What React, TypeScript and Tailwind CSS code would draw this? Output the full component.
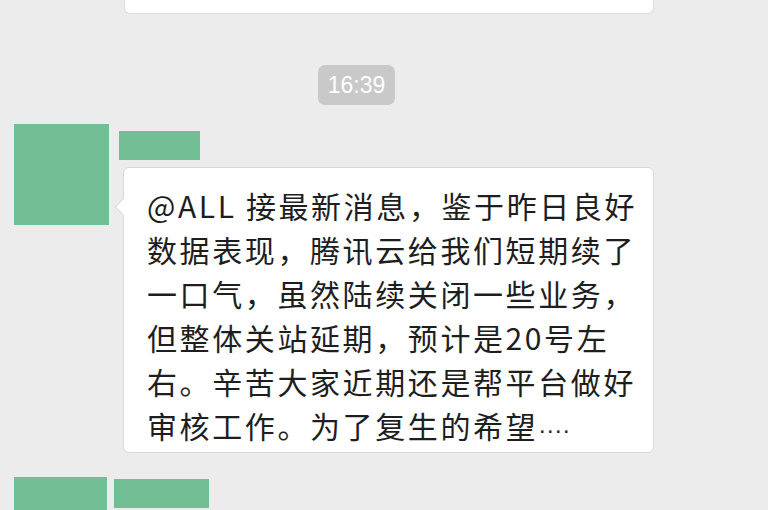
import React from "react";

const lines = [
  "@ALL 接最新消息，鉴于昨日良好",
  "数据表现，腾讯云给我们短期续了",
  "一口气，虽然陆续关闭一些业务，",
  "但整体关站延期，预计是20号左",
  "右。辛苦大家近期还是帮平台做好",
];

export default function App() {
  return (
    <div
      className="w-[768px] h-[510px] overflow-hidden bg-[#ececec] flex flex-col"
      style={{ fontFamily: '"Noto Sans CJK SC", "Noto Sans", sans-serif' }}
    >
      {/* previous bubble */}
      <div className="ml-[124px] w-[530px] h-[14px] shrink-0 bg-white rounded-b-[6px] border border-t-0 border-[#dcdcdc]" />

      {/* time */}
      <div
        className="ml-[318px] mt-[51px] w-[77px] h-[40px] shrink-0 rounded-[7px] bg-[#c9c9c9] flex items-center justify-center text-white text-[23px]"
        style={{ fontFamily: '"Liberation Sans", Arial, sans-serif' }}
      >
        16:39
      </div>

      {/* message row */}
      <div className="mt-[19px] flex shrink-0">
        <div className="ml-[14px] w-[95px] h-[101px] bg-[#72bf95]" />
        <div className="ml-[10px] flex flex-col">
          <div className="mt-[7px] w-[81px] h-[29px] bg-[#72bf95]" />
          <div className="relative mt-[7px] ml-[4px] w-[531px] h-[286px] bg-white rounded-[6px] border border-[#d9d9d9] pl-[23px] pt-[15px] text-[30px] leading-[44px] tracking-[2.6px] text-[#1e1e1e]">
            <div className="absolute left-[-7px] top-[33px] w-[12px] h-[12px] bg-white border-l border-b border-[#d9d9d9] rotate-45" />
            {lines.map((l, i) => (
              <div key={i} className="whitespace-nowrap">{l}</div>
            ))}
            <div className="whitespace-nowrap">
              审核工作。为了复生的希望
              <span
                className="text-[24px] tracking-normal"
                style={{ fontFamily: '"Liberation Sans", Arial, sans-serif' }}
              >
                ····
              </span>
            </div>
          </div>
        </div>
      </div>

      {/* next row */}
      <div className="mt-[24px] flex shrink-0">
        <div className="ml-[14px] w-[93px] h-[40px] bg-[#72bf95]" />
        <div className="ml-[7px] mt-[2px] w-[95px] h-[29px] bg-[#72bf95]" />
      </div>
    </div>
  );
}
